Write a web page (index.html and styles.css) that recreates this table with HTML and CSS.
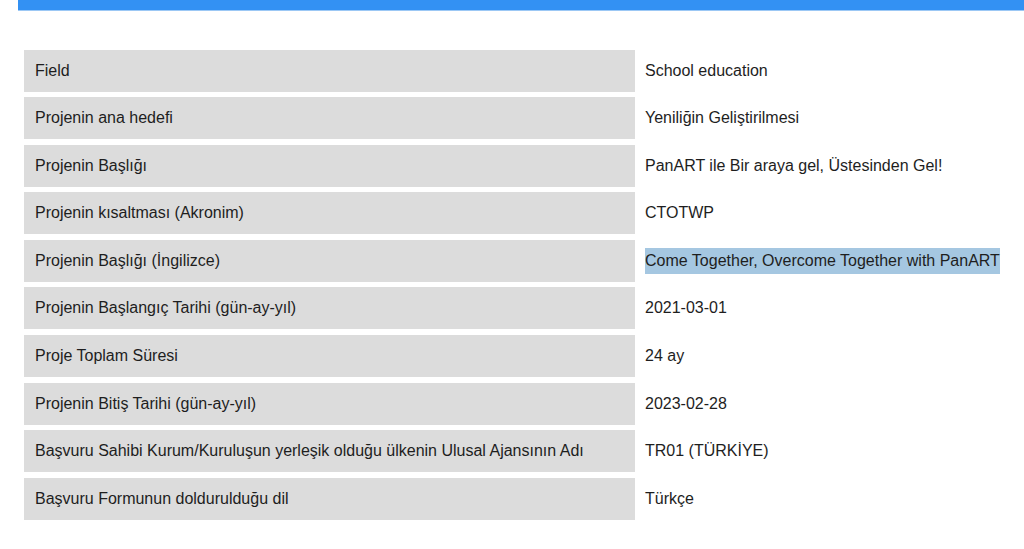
FILE: index.html
```html
<!DOCTYPE html>
<html lang="tr">
<head>
<meta charset="utf-8">
<link rel="stylesheet" href="styles.css">
</head>
<body>
<div class="page">
  <div class="topbar"></div>
  <div class="details">
    <div class="label">Field</div><div class="value">School education</div>
    <div class="label">Projenin ana hedefi</div><div class="value">Yeniliğin Geliştirilmesi</div>
    <div class="label">Projenin Başlığı</div><div class="value">PanART ile Bir araya gel, Üstesinden Gel!</div>
    <div class="label">Projenin kısaltması (Akronim)</div><div class="value">CTOTWP</div>
    <div class="label">Projenin Başlığı (İngilizce)</div><div class="value"><span class="selected">Come Together, Overcome Together with PanART</span></div>
    <div class="label">Projenin Başlangıç Tarihi (gün-ay-yıl)</div><div class="value">2021-03-01</div>
    <div class="label">Proje Toplam Süresi</div><div class="value">24 ay</div>
    <div class="label">Projenin Bitiş Tarihi (gün-ay-yıl)</div><div class="value">2023-02-28</div>
    <div class="label">Başvuru Sahibi Kurum/Kuruluşun yerleşik olduğu ülkenin Ulusal Ajansının Adı</div><div class="value">TR01 (TÜRKİYE)</div>
    <div class="label">Başvuru Formunun doldurulduğu dil</div><div class="value">Türkçe</div>
  </div>
</div>
</body>
</html>
```
FILE: styles.css
```css
html, body {
  margin: 0;
  padding: 0;
  background: #ffffff;
}
body {
  font-family: "Liberation Sans", Arial, Helvetica, sans-serif;
  font-size: 16px;
  color: #1e1e1e;
}
.page {
  padding-left: 18px;
}
.topbar {
  height: 10px;
  background: #3391f3;
  border-bottom: 1px solid #9cc8f5;
}
.details {
  margin-top: 38.5px;
  margin-left: 6px;
  display: grid;
  grid-template-columns: 611px 1fr;
  grid-auto-rows: 42px;
  row-gap: 5.6px;
}
.label {
  background: #dcdcdc;
  padding-left: 11px;
  display: flex;
  align-items: center;
}
.value {
  padding-left: 10px;
  display: flex;
  align-items: center;
}
.selected {
  background: #a5c7e1;
  line-height: 26px;
  display: inline-block;
}
```
